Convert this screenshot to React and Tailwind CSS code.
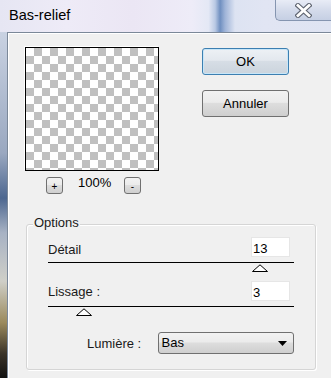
import React from 'react'

const font = { fontFamily: '"Liberation Sans", Arial, sans-serif' }

function SmallButton({ children }) {
  return (
    <button
      type="button"
      className="flex h-[17px] w-[17px] items-center justify-center rounded-[3px] border border-[#707070] bg-[linear-gradient(#f2f2f2,#ebebeb_45%,#dddddd_50%,#cfcfcf)] pt-[2px] text-[10px] leading-none text-black"
    >
      {children}
    </button>
  )
}

function Thumb() {
  return (
    <svg width="16" height="8" viewBox="0 0 16 8" className="block">
      <path d="M0.5 7.5 L8 0.8 L15.5 7.5 Z" fill="#fff" stroke="#000" strokeWidth="1" />
    </svg>
  )
}

function Slider({ label, value, thumbAt, labelTop }) {
  return (
    <div>
      <div className="flex items-start justify-between">
        <span className="text-[13px] leading-[15px] text-[#1a1a1a]" style={{ marginTop: labelTop }}>{label}</span>
        <div className="mr-[4px] h-[20px] w-[39px] border border-[#e6e6e6] bg-white pl-[1px] pt-[3px] text-[13px] leading-[15px] text-black">
          {value}
        </div>
      </div>
      <div className="mt-[5px] h-[1px] bg-black" />
      <div className="mt-[1px]" style={{ marginLeft: thumbAt }}>
        <Thumb />
      </div>
    </div>
  )
}

export default function App() {
  return (
    <div className="flex h-[378px] w-[331px] flex-col overflow-hidden" style={font}>
      <div className="flex h-[32px] bg-[linear-gradient(90deg,#e6e6f3_0%,#eeebf7_20%,#ebe6f4_40%,#eeecf8_58%,#e4e8f5_63%,#b9c9e4_65%,#6f8fc0_66.5%,#9fb4d8_68%,#dde3f2_71%,#e1e5f3_80%,#dfe4f2_100%)]">
        <span className="pl-[9px] pt-[7px] text-[14.5px] leading-[16px] text-black">Bas-relief</span>
        <div className="ml-auto mr-[-6px] flex h-[21px] w-[62px] items-center justify-center rounded-bl-[5px] border-b border-l border-[#8595b0] bg-[linear-gradient(#e8ecf6,#d4dbeb_50%,#c5cfe3)] pr-[6px]">
          <svg width="17" height="15" viewBox="0 0 17 15">
            <path d="M3 2.5 L14 12.5 M14 2.5 L3 12.5" stroke="#5e6470" strokeWidth="5" strokeLinecap="square" />
            <path d="M3 2.5 L14 12.5 M14 2.5 L3 12.5" stroke="#ffffff" strokeWidth="2.8" strokeLinecap="square" />
          </svg>
        </div>
      </div>

      <div className="flex flex-1">
        <div className="w-[7px] bg-[linear-gradient(#c9d2e2,#9aa8c0_35%,#4d6790_48%,#a7b2c4_58%,#cfcfc8_72%,#9b8a5c_84%,#3a3328_93%,#111_100%)]" />
        <div className="flex-1 border-l border-t border-[#7b8899] bg-[#f0f0f0] shadow-[inset_1px_1px_0_#ffffff]">
          <div className="flex pl-[17px] pt-[14px]">
            <div>
              <div className="h-[124px] w-[134px] border border-black bg-[conic-gradient(#c0c0c0_25%,#ffffff_0_50%,#c0c0c0_0_75%,#ffffff_0)] bg-[length:16px_16px] shadow-[-1px_-1px_0_#ffffff]" />
              <div className="mt-[6px] flex items-start pl-[21px]">
                <SmallButton>+</SmallButton>
                <span className="ml-[15px] w-[31px] text-[13px] leading-[12px] text-black">100%</span>
                <div className="ml-[15px]">
                  <SmallButton>-</SmallButton>
                </div>
              </div>
            </div>
            <div className="ml-[43px] mt-[1px] flex flex-col">
              <button
                type="button"
                className="h-[27px] w-[87px] rounded-[3px] border border-[#3c7fb1] bg-[linear-gradient(#edf1f5,#e3e8ee_45%,#d6dde5_50%,#cbd4dd)] text-[13px] text-black shadow-[inset_0_0_0_1px_#c8e6f8]"
              >
                OK
              </button>
              <button
                type="button"
                className="mt-[15px] h-[27px] w-[87px] rounded-[3px] border border-[#707070] bg-[linear-gradient(#f2f2f2,#ebebeb_45%,#dddddd_50%,#cfcfcf)] text-[13px] text-black"
              >
                Annuler
              </button>
            </div>
          </div>

          <div className="relative ml-[18px] mt-[30px] h-[146px] w-[290px] rounded-[3px] border border-[#d5d5d5] shadow-[inset_1px_1px_0_#ffffff,1px_1px_0_#ffffff]">
            <span className="absolute left-[6px] top-[-10px] bg-[#f0f0f0] px-[1px] text-[13px] leading-[15px] text-[#1a1a1a]">Options</span>
            <div className="px-[21px] pt-[12px]">
              <Slider label="Détail" value="13" thumbAt={204} labelTop={5} />
              <div className="mt-[9px]">
                <Slider label="Lissage :" value="3" thumbAt={28} labelTop={3} />
              </div>
              <div className="mt-[16px] flex items-center pl-[39px]">
                <span className="w-[72px] text-[13px] leading-[15px] text-[#1a1a1a]">Lumière :</span>
                <div className="flex h-[22px] w-[139px] items-center justify-between rounded-[3px] border border-[#707070] bg-[linear-gradient(#f2f2f2,#ebebeb_45%,#dddddd_50%,#cfcfcf)] pl-[3px] pr-[6px] text-[13px] text-black">
                  <span>Bas</span>
                  <svg width="9" height="5" viewBox="0 0 9 5">
                    <path d="M0 0 H9 L4.5 5 Z" fill="#000" />
                  </svg>
                </div>
              </div>
            </div>
          </div>
        </div>
      </div>
    </div>
  )
}
